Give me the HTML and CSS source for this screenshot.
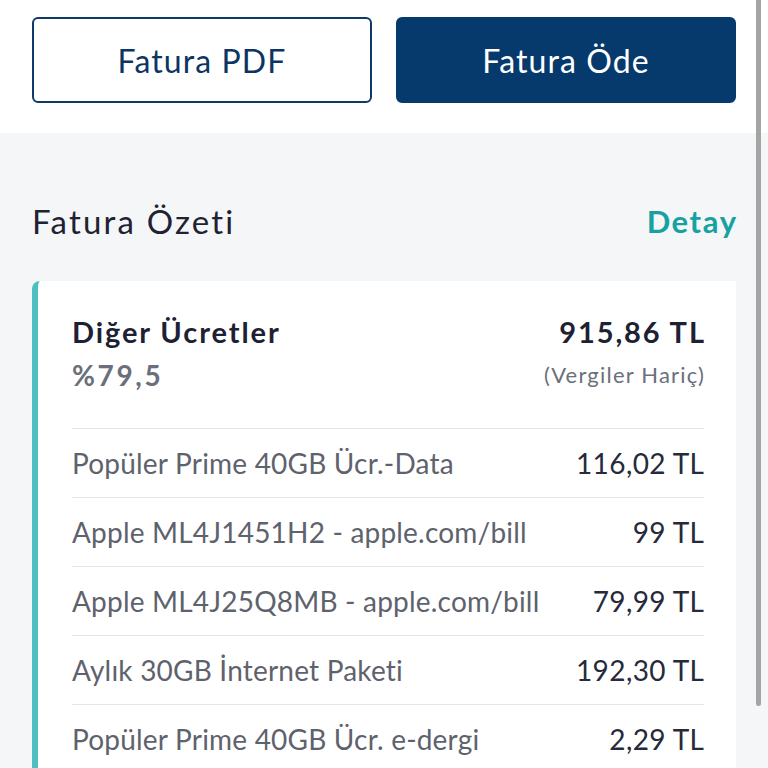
FILE: index.html
```html
<!DOCTYPE html>
<html lang="tr">
<head>
    <meta charset="UTF-8">
    <meta name="viewport" content="width=device-width, initial-scale=1.0">
    <title>Fatura Özeti</title>
    <link rel="stylesheet" href="styles.css">
</head>
<body>
    <div class="actions">
        <button class="btn btn-outline">Fatura PDF</button>
        <button class="btn btn-primary">Fatura Öde</button>
    </div>

    <div class="summary">
        <div class="summary-head">
            <h2>Fatura Özeti</h2>
            <a href="#" class="detail-link">Detay</a>
        </div>

        <div class="card">
            <div class="card-head">
                <div class="card-col">
                    <span class="card-title">Diğer Ücretler</span>
                    <span class="card-pct">%79,5</span>
                </div>
                <div class="card-col right">
                    <span class="card-total">915,86 TL</span>
                    <span class="card-note">(Vergiler Hariç)</span>
                </div>
            </div>
            <div class="line">
                <span class="line-name">Popüler Prime 40GB Ücr.-Data</span>
                <span class="line-price">116,02 TL</span>
            </div>
            <div class="line">
                <span class="line-name">Apple ML4J1451H2 - apple.com/bill</span>
                <span class="line-price">99 TL</span>
            </div>
            <div class="line">
                <span class="line-name">Apple ML4J25Q8MB - apple.com/bill</span>
                <span class="line-price">79,99 TL</span>
            </div>
            <div class="line">
                <span class="line-name">Aylık 30GB İnternet Paketi</span>
                <span class="line-price">192,30 TL</span>
            </div>
            <div class="line">
                <span class="line-name">Popüler Prime 40GB Ücr. e-dergi</span>
                <span class="line-price">2,29 TL</span>
            </div>
        </div>
    </div>

    <div class="scrollbar"></div>
</body>
</html>
```

FILE: styles.css
```css
body {
    font-family: Lato, "Open Sans", sans-serif;
    background-color: #f5f6f8;
    margin: 0;
    padding: 0;
    height: 768px;
    overflow: hidden;
    position: relative;
}

.actions {
    background-color: #ffffff;
    display: flex;
    gap: 24px;
    padding: 17px 32px 30px;
}

.btn {
    flex: 1;
    height: 86px;
    border-radius: 6px;
    font-family: inherit;
    font-size: 32px;
    letter-spacing: 1.1px;
    cursor: pointer;
}

.btn-outline {
    background-color: #ffffff;
    border: 2px solid #0d3a69;
    color: #0d3563;
}

.btn-primary {
    background-color: #073a6c;
    border: 2px solid #073a6c;
    color: #ffffff;
}

.summary {
    padding: 0 32px;
}

.summary-head {
    display: flex;
    justify-content: space-between;
    align-items: center;
    height: 40px;
    padding-top: 68px;
    margin-bottom: 40px;
}

.summary-head h2 {
    margin: 0;
    font-size: 33px;
    font-weight: normal;
    letter-spacing: 2.2px;
    color: #1f2232;
}

.detail-link {
    font-size: 31px;
    font-weight: bold;
    letter-spacing: 1.6px;
    margin-right: -1.6px;
    color: #17a1a3;
    text-decoration: none;
}

.card {
    background-color: #ffffff;
    border-left: 6px solid #4dbec4;
    border-top-left-radius: 8px;
    padding: 31px 32px 0 34px;
}

.card-head {
    display: flex;
    justify-content: space-between;
    padding-bottom: 33px;
}

.card-col {
    display: flex;
    flex-direction: column;
    gap: 3px;
}

.card-col.right {
    align-items: flex-end;
}

.card-title,
.card-total {
    font-size: 29px;
    line-height: 40px;
    font-weight: bold;
    letter-spacing: 1.9px;
    color: #1e2133;
}

.card-total {
    margin-right: -1.9px;
}

.card-pct {
    font-size: 28px;
    line-height: 40px;
    font-weight: bold;
    letter-spacing: 2.6px;
    color: #6b6f7c;
}

.card-note {
    font-size: 22px;
    line-height: 40px;
    letter-spacing: 1.2px;
    margin-right: -1.2px;
    color: #6b6f7c;
}

.line {
    display: flex;
    justify-content: space-between;
    align-items: center;
    height: 68px;
    border-top: 1px solid #e3e5e9;
}

.line-name {
    font-size: 28px;
    letter-spacing: 0.2px;
    color: #5e626d;
}

.line-price {
    font-size: 28px;
    letter-spacing: 0.4px;
    margin-right: -0.4px;
    color: #262a3a;
}

.scrollbar {
    position: absolute;
    top: 0;
    left: 756px;
    width: 5px;
    height: 706px;
    background-color: #a4a4a4;
    border-radius: 0 0 3px 3px;
}
```
